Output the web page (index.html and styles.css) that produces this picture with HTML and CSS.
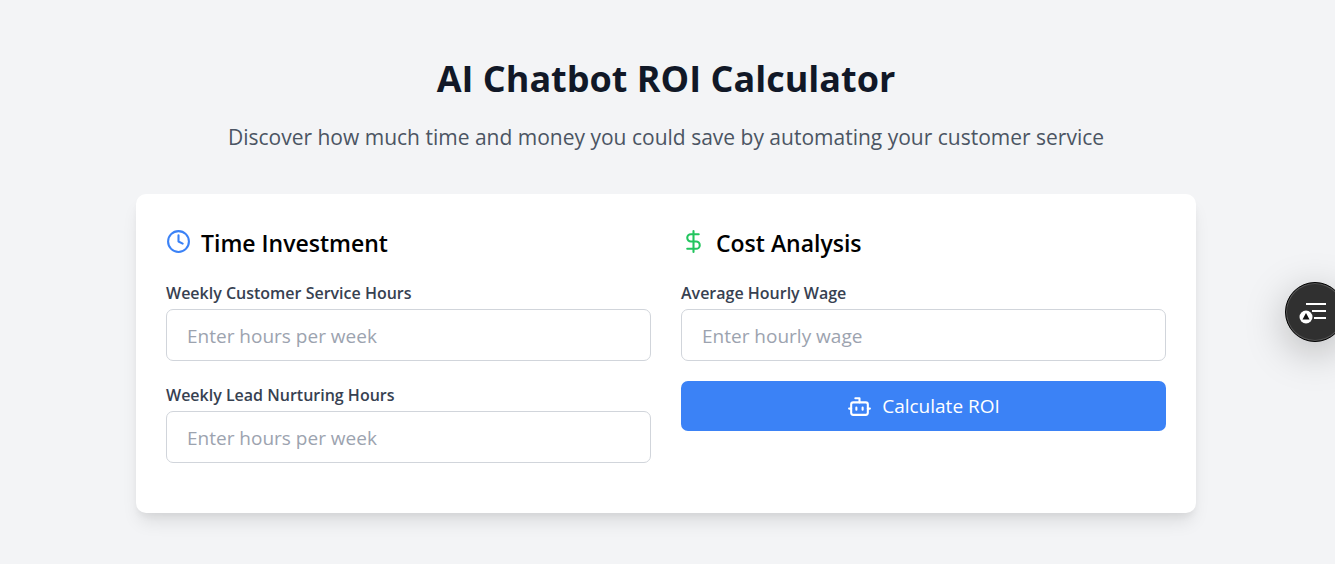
FILE: index.html
```html
<!DOCTYPE html>
<html lang="en">
<head>
<meta charset="utf-8">
<meta name="viewport" content="width=device-width, initial-scale=1">
<title>AI Chatbot ROI Calculator</title>
<link rel="stylesheet" href="styles.css">
</head>
<body>
<main class="page">
  <header class="intro">
    <h1 class="title">AI Chatbot ROI Calculator</h1>
    <p class="subtitle">Discover how much time and money you could save by automating your customer service</p>
  </header>
  <form class="card">
    <section class="column">
      <h2 class="heading">
        <svg class="icon icon-time" viewBox="0 0 24 24" aria-hidden="true"><circle cx="12" cy="12" r="10"/><path d="M12 6v6l4 2"/></svg>
        Time Investment
      </h2>
      <div class="field">
        <label class="label" for="service">Weekly Customer Service Hours</label>
        <input class="input" id="service" type="text" inputmode="numeric" placeholder="Enter hours per week">
      </div>
      <div class="field">
        <label class="label" for="nurturing">Weekly Lead Nurturing Hours</label>
        <input class="input" id="nurturing" type="text" inputmode="numeric" placeholder="Enter hours per week">
      </div>
    </section>
    <section class="column">
      <h2 class="heading">
        <svg class="icon icon-cost" viewBox="0 0 24 24" aria-hidden="true"><path d="M12 2v20M17 5H9.500a3.500 3.500 0 0 0 0 7h5a3.500 3.500 0 0 1 0 7H6"/></svg>
        Cost Analysis
      </h2>
      <div class="field">
        <label class="label" for="wage">Average Hourly Wage</label>
        <input class="input" id="wage" type="text" inputmode="decimal" placeholder="Enter hourly wage">
      </div>
      <button class="submit" type="button">
        <svg class="icon" viewBox="0 0 24 24" aria-hidden="true"><path d="M12 8V4H8"/><rect x="4" y="8" width="16" height="12" rx="2"/><path d="M2 14h2M20 14h2M15 13v2M9 13v2"/></svg>
        Calculate ROI
      </button>
    </section>
  </form>
</main>
<button class="widget" type="button" aria-label="Open page menu">
  <svg class="widget-icon" viewBox="0 0 28 24" aria-hidden="true">
    <path class="widget-lines" d="M7 4h20M13 11h14M15 18h12"/>
    <circle class="widget-disc" cx="7" cy="17" r="6.500"/>
    <path class="widget-mark" d="M7 13l3.500 6.500h-7z"/>
  </svg>
</button>
</body>
</html>
```
FILE: styles.css
```css
* {
  box-sizing: border-box;
}

body {
  margin: 0;
  padding-right: 3px;
  min-height: 100vh;
  background: #f3f4f6;
  color: #000;
  font-family: "Segoe UI", "Open Sans", "Noto Sans", sans-serif;
  font-size: 19px;
  overflow-x: hidden;
}

.page {
  max-width: 1120px;
  margin: 0 auto;
  padding: 54px 30px 50px;
}

.intro {
  text-align: center;
  margin-bottom: 38px;
}

.title {
  margin: 0 0 15px;
  color: #111827;
  font-size: 36px;
  font-weight: 700;
  line-height: 50px;
}

.subtitle {
  margin: 0;
  color: #4b5563;
  font-size: 21px;
  line-height: 37px;
}

.card {
  display: grid;
  grid-template-columns: 1fr 1fr;
  gap: 30px;
  padding: 30px;
  border-radius: 10px;
  background: #fff;
  box-shadow: 0 12px 18px -4px rgba(0, 0, 0, 0.1), 0 5px 7px -2px rgba(0, 0, 0, 0.05);
}

.heading {
  display: flex;
  align-items: flex-start;
  gap: 10px;
  margin: 0 0 17px;
  font-size: 23px;
  font-weight: 600;
  line-height: 38px;
}

.icon {
  flex: none;
  width: 25px;
  height: 25px;
  fill: none;
  stroke: currentColor;
  stroke-width: 2;
  stroke-linecap: round;
  stroke-linejoin: round;
}

.heading .icon {
  margin-top: 5px;
}

.icon-time {
  color: #3b82f6;
}

.icon-cost {
  color: #22c55e;
}

.field {
  margin-bottom: 20px;
}

.label {
  display: block;
  margin-bottom: 1px;
  color: #374151;
  font-size: 16px;
  font-weight: 600;
  line-height: 29px;
}

.input {
  display: block;
  width: 100%;
  height: 52px;
  padding: 2px 20px 0;
  border: 1px solid #d1d5db;
  border-radius: 7px;
  background: #fff;
  color: #000;
  font: inherit;
}

.input::placeholder {
  color: #9ca3af;
  opacity: 1;
}

.submit {
  display: flex;
  align-items: center;
  justify-content: center;
  gap: 10px;
  width: 100%;
  height: 50px;
  border: 0;
  border-radius: 7px;
  background: #3b82f6;
  color: #fff;
  font: inherit;
  cursor: pointer;
}

.widget {
  position: fixed;
  top: 282px;
  right: -10px;
  display: flex;
  align-items: center;
  width: 60px;
  height: 60px;
  padding: 0 0 0 13px;
  border: 1px solid #000;
  border-radius: 50%;
  background: #303030;
  box-shadow: inset 0 0 0 1px #555, 0 10px 40px rgba(0, 0, 0, 0.25);
  cursor: pointer;
}

.widget-icon {
  width: 28px;
  height: 24px;
}

.widget-lines {
  stroke: #fff;
  stroke-width: 2;
}

.widget-disc {
  fill: #fff;
}

.widget-mark {
  fill: #111;
}
```
